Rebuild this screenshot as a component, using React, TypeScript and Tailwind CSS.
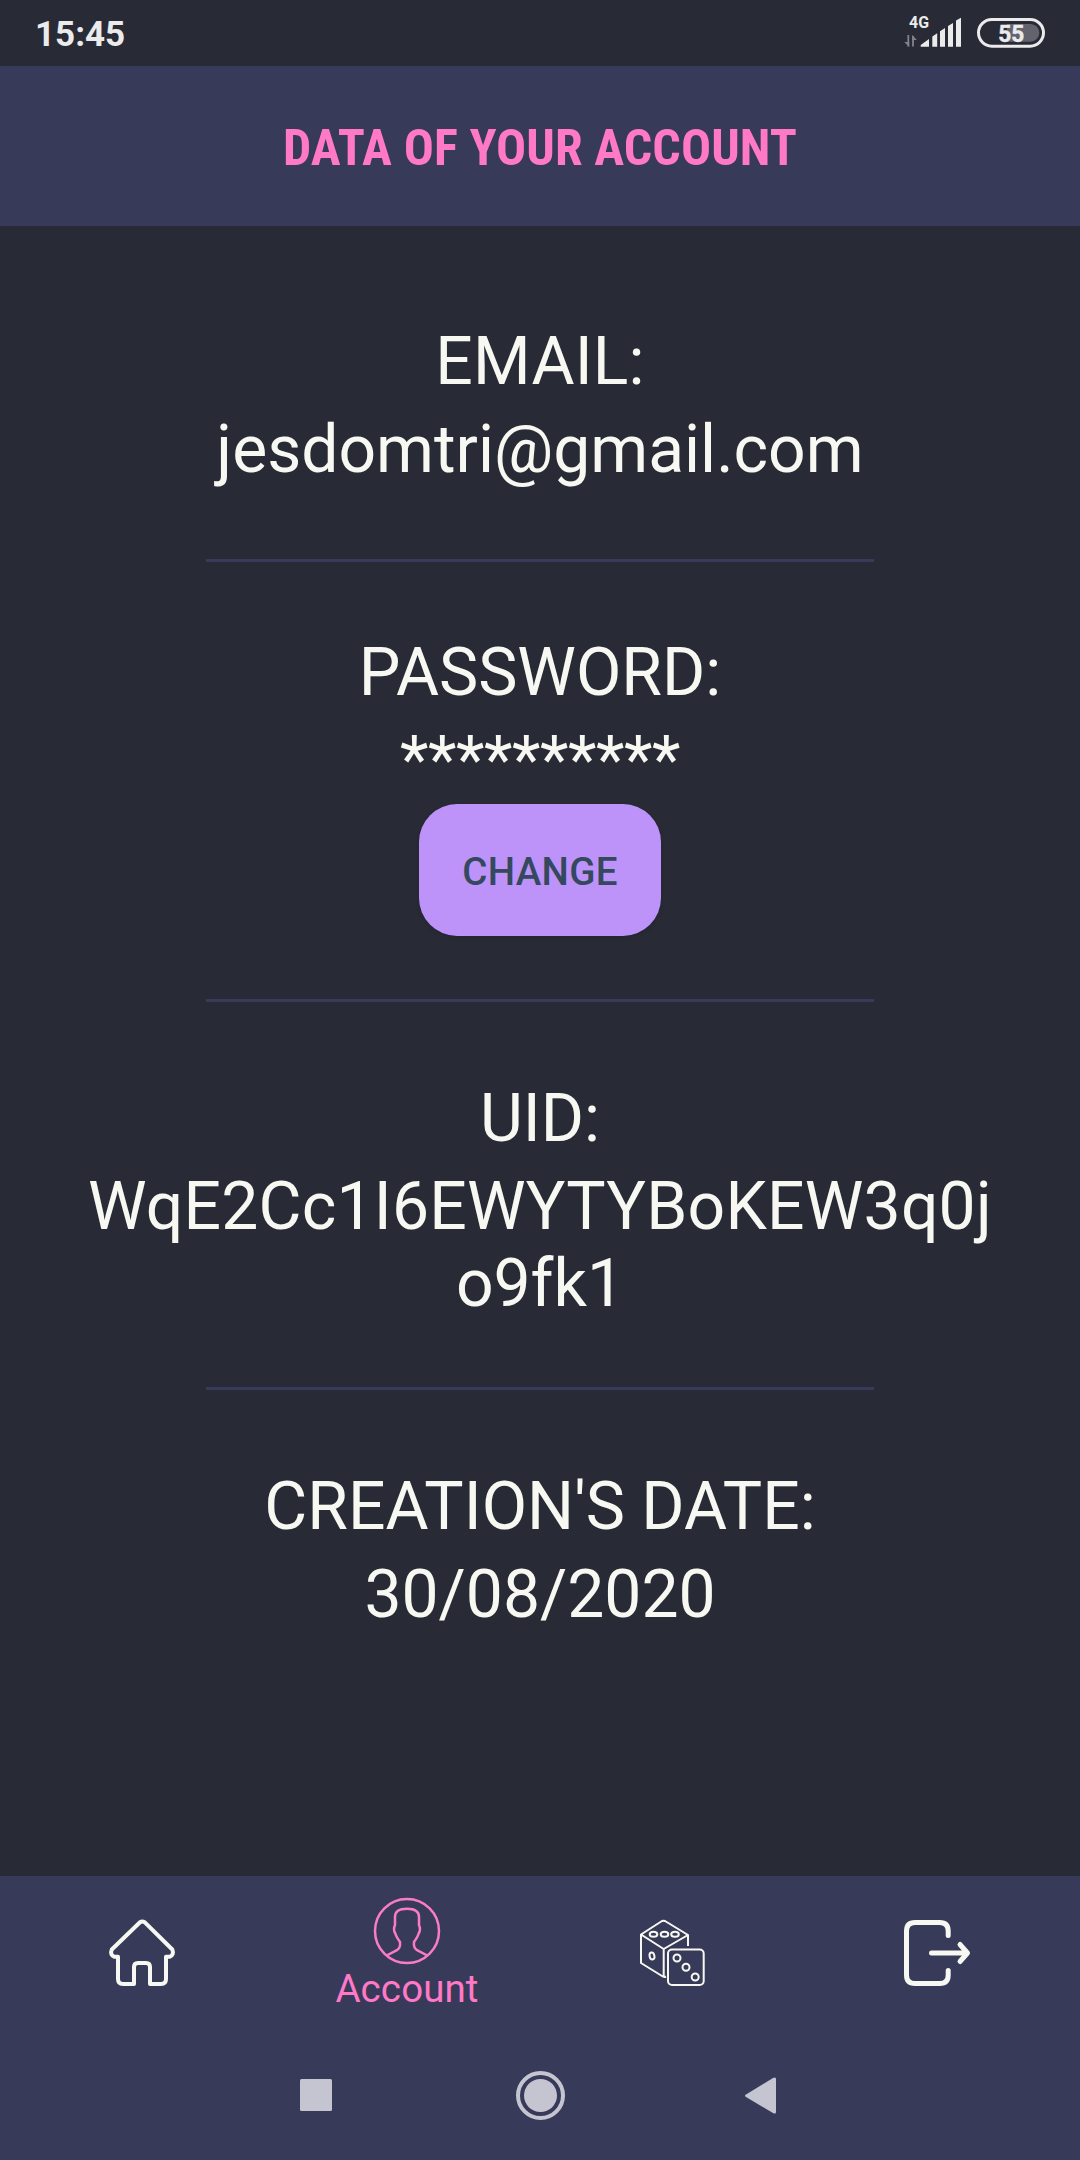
import React from "react";

const Divider = ({ className = "" }: { className?: string }) => (
  <div className={`h-[3px] w-[668px] shrink-0 bg-[#383a59] ${className}`} />
);

function StatusBar() {
  return (
    <div className="flex h-[66px] shrink-0 items-center justify-between pl-[35px] pr-[35px] text-[#ebebeb]">
      <span className="pt-[4px] text-[35px] font-bold leading-[40px]">15:45</span>
      <div className="flex items-center gap-[16px]">
        <svg width="57" height="52" viewBox="0 -8 57 52" fill="#ebebeb">
          <text x="5" y="13" fontSize="16" fontWeight="700" fontFamily="Roboto, sans-serif" textLength="20" lengthAdjust="spacingAndGlyphs">4G</text>
          <path d="M4.300 20V31.500M9 31.500V21" stroke="#82838a" strokeWidth="1.800" fill="none" />
          <path d="M0.300 27L5.200 32V27ZM8.100 20L12.800 25H8.100Z" fill="#82838a" />
          <path d="M16.700 31.700V30L25 24V31.700ZM28.300 31.700V21.500L33.200 18.300V31.700ZM36 31.700V16.300L41 13V31.700ZM44 31.700V11L49 8V31.700ZM52 31.700V5.500L57 2.700V31.700Z" />
        </svg>
        <svg width="68" height="52" viewBox="0 -8 68 52">
          <path d="M30 9H53.500A8.850 8.850 0 0 1 53.500 26.700H30Z" fill="#62636c" />
          <rect x="1.500" y="4.500" width="65" height="26.700" rx="13.350" fill="none" stroke="#ebebeb" strokeWidth="3" />
          <text x="34.300" y="26.900" textAnchor="middle" fontSize="24.500" fontWeight="700" fill="#ebebeb" stroke="#ebebeb" strokeWidth="0.400" fontFamily="Roboto, sans-serif" textLength="26" lengthAdjust="spacingAndGlyphs">55</text>
        </svg>
      </div>
    </div>
  );
}

function Field({ label, children }: { label: React.ReactNode; children: React.ReactNode }) {
  return (
    <section className="flex flex-col items-center gap-[11px] text-center">
      <div>{label}</div>
      <div>{children}</div>
    </section>
  );
}

const HomeIcon = () => (
  <svg width="110" height="100" viewBox="0 0 110 100" fill="none" stroke="#f8f8f2" strokeWidth="4" strokeLinejoin="round">
    <path d="M50 22.200Q52.300 20.700 54.600 22.200L82.300 49.500Q84.500 54.800 79.500 56.800H76V79Q76 84 71 84H60V67Q60 63 56 63H48Q44 63 44 67V84H33Q28 84 28 79V56.800H24.500Q19.500 54.800 21.800 49.500Z" />
  </svg>
);

const AccountIcon = () => (
  <svg width="68" height="68" viewBox="0 0 68 68" fill="none" stroke="#f97dc5" strokeWidth="2.500">
    <circle cx="34" cy="34" r="32" />
    <path d="M13.700 58.500L23.500 53.300C27 51.500 27.500 49 27 45C24.500 41.500 23 39 22.300 36.500C20.500 33.500 20.800 30.500 22 28V20C22 14.500 26 11.700 34 11.700C42.500 11.700 46 14.500 46 20V28C47.200 30.500 47.500 33.500 45.700 36.500C45 39 43.500 41.500 41 45C40.500 49 41 51.500 44.500 53.300L54.300 58.500" />
  </svg>
);

const DiceIcon = () => (
  <svg width="110" height="100" viewBox="0 0 110 100" fill="none" stroke="#f8f8f2" strokeWidth="2" strokeLinejoin="round">
    <path d="M68 46V35L45 21Q43.500 20.300 42 21L21 34.500V63L42 76Q44 77.500 46 76.500M21 34.500L43.700 49L68 35M43.700 49V77" />
    <ellipse cx="33.500" cy="34.200" rx="3.800" ry="2.500" />
    <ellipse cx="44.500" cy="34.200" rx="3.800" ry="2.500" />
    <ellipse cx="55" cy="34.200" rx="3.800" ry="2.500" />
    <ellipse cx="32" cy="56" rx="2.400" ry="3.500" transform="rotate(-12 32 56)" />
    <rect x="48" y="49.500" width="35.700" height="35.500" rx="4" />
    <circle cx="57" cy="58" r="3.500" />
    <circle cx="66" cy="67.300" r="3.500" />
    <circle cx="75.200" cy="77" r="3.500" />
  </svg>
);

const LogoutIcon = () => (
  <svg width="110" height="100" viewBox="0 0 110 100" fill="none" stroke="#f8f8f2" strokeWidth="5" strokeLinecap="round" strokeLinejoin="round">
    <path d="M68.200 35.500V31Q68.200 22.500 59.700 22.500H35Q26.500 22.500 26.500 31V75Q26.500 83.500 35 83.500H59.700Q68.200 83.500 68.200 75V70.500" />
    <path d="M51.500 53H87M80 44.500L87.500 53L80 61.500" />
  </svg>
);

export default function App() {
  return (
    <div className="flex h-[2160px] w-[1080px] flex-col overflow-hidden bg-[#282a36] font-['Roboto',sans-serif]">
      <StatusBar />
      <header className="flex h-[160px] shrink-0 justify-center bg-[#383a59] pt-[53px]">
        <h1 className="whitespace-nowrap font-['Roboto_Condensed','Roboto',sans-serif] text-[50px] font-bold leading-[58px] tracking-[0.1px] text-[#ff79c6] [font-stretch:75%]">
          DATA OF YOUR ACCOUNT
        </h1>
      </header>
      <main className="flex flex-1 flex-col items-center pt-[97px] text-[66px] leading-[77px] text-[#f8f8f2]">
        <Field label={<span className="tracking-[0.2px]">EMAIL:</span>}>jesdomtri@gmail.com</Field>
        <Divider className="mt-[71px] mb-[72px]" />
        <Field label="PASSWORD:">
          <span className="tracking-[-0.4px]">**********</span>
        </Field>
        <button className="mt-[5px] h-[132px] w-[242px] shrink-0 rounded-[38px] bg-[#bd93f9] pt-[2px] text-[38.5px] font-medium leading-[45px] tracking-[0.3px] text-[#34495e] shadow-[0_2px_4px_rgba(0,0,0,0.12)]">
          CHANGE
        </button>
        <Divider className="mt-[63px] mb-[78px]" />
        <Field label="UID:">
          <span className="tracking-[0.22px]">WqE2Cc1I6EWYTYBoKEW3q0j</span>
          <br />
          o9fk1
        </Field>
        <Divider className="mt-[65px] mb-[78px]" />
        <Field label="CREATION'S DATE:">30/08/2020</Field>
      </main>
      <footer className="flex h-[284px] shrink-0 flex-col bg-[#383a59]">
        <nav className="flex h-[154px] pt-[21px]">
          <a className="flex w-[290px] justify-center pt-[3px]"><HomeIcon /></a>
          <a className="flex w-[234px] flex-col items-center text-[38.5px] leading-[45px] tracking-[0.1px] text-[#ff79c6]">
            <AccountIcon />
            <span className="mt-px">Account</span>
          </a>
          <a className="flex w-[302px] justify-center pt-[3px]"><DiceIcon /></a>
          <a className="flex w-[218px] justify-center pt-[3px]"><LogoutIcon /></a>
        </nav>
        <div className="flex h-[130px] pl-[280px]">
          <svg width="520" height="100" viewBox="0 0 520 100" className="mt-[20px]" fill="#c5c4d1">
            <rect x="20" y="29" width="32" height="32" rx="1.500" />
            <circle cx="260.500" cy="45.500" r="16.500" />
            <circle cx="260.500" cy="45.500" r="22.500" fill="none" stroke="#c5c4d1" strokeWidth="4" />
            <path d="M466 44.500L493 28Q496 26.500 496 29V62Q496 64.500 493 63L466 47Q464 45.700 466 44.500Z" />
          </svg>
        </div>
      </footer>
    </div>
  );
}
